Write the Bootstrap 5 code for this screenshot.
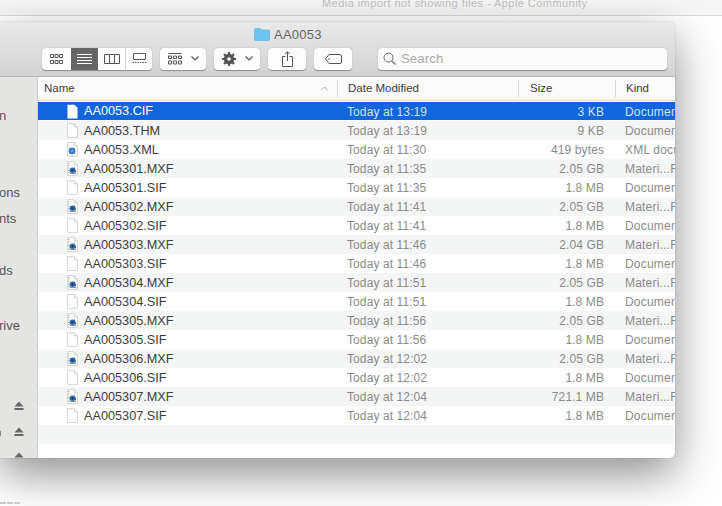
<!DOCTYPE html>
<html lang="en"><head><meta charset="utf-8"><title>AA0053</title>
<link rel="stylesheet" href="https://cdn.jsdelivr.net/npm/bootstrap@5.3.0/dist/css/bootstrap.min.css">
<script src="https://cdn.jsdelivr.net/npm/bootstrap@5.3.0/dist/js/bootstrap.bundle.min.js"></script>
<style>
html,body{height:506px;overflow:hidden}
body{background:#fff;font-family:"Liberation Sans",Arial,sans-serif;font-size:12px;color:#333;position:relative}
.tabbar{height:16px;background:#f6f6f6;border-bottom:1px solid #d9d9d9;padding-left:322px;font-size:11px;line-height:7px;color:#bdbdbd;letter-spacing:.45px;overflow:hidden;white-space:nowrap}
.finder{width:675px;height:436px;margin-top:6px;border-radius:0 6px 6px 0;overflow:hidden;box-shadow:0 16px 45px rgba(0,0,0,.45),0 0 1px rgba(0,0,0,.5);background:#fff}
.tb{height:55px;background:linear-gradient(#e9e9e9,#d2d2d2);border-bottom:1px solid #b5b5b5;padding:4px 8px 0 42px}
.ttl{font-size:13px;line-height:15px;color:#666;gap:4px;height:16px;margin-left:212px;letter-spacing:.25px}
.tools{height:23px;margin-top:5px;gap:8px}
.seg{height:22px;background:#fdfdfd;border-radius:4px;box-shadow:0 .5px 1px rgba(0,0,0,.35);display:flex;align-items:center;justify-content:center;overflow:hidden;flex:none}
.seg svg{display:block}
.arrowgap{gap:9px}
.vw{width:27px;height:22px;display:flex;align-items:center;justify-content:center}
.vw.first{width:29px}
.vw.on{background:#656565}
.vw.sep{border-left:1px solid #d7d7d7}
.srch{width:290px;height:22px;margin-left:18px;background:#fbfbfb;border-radius:4px;box-shadow:0 .5px 1px rgba(0,0,0,.35);display:flex;align-items:center;padding-left:5px;gap:5px;font-size:13px;color:#a9a9a9;letter-spacing:.2px}
.bodyw{height:381px}
.side{width:38px;flex:none;background:#e4e4e2;border-right:1px solid #cfcfcf;font-size:13px;color:#555;overflow:hidden;position:relative}
.side>div{line-height:16px;white-space:nowrap;margin-left:-1px}
.s1{margin-top:31px}.s2{margin-top:61px}.s3{margin-top:10px}.s4{margin-top:36px}.s5{margin-top:39px}
.ej{position:absolute;left:14px}
.side>.nick{position:absolute;left:0;top:354px;width:1px;height:5px;background:#888;margin:0}
.list{flex:1;min-width:0;overflow:hidden}
.hd{height:24px;border-bottom:1px solid #dcdcdc;background:#fbfbfb;font-size:11.5px;color:#3a3a3a;display:flex;align-items:center}
.hd>div{height:17px;line-height:17px;border-right:1px solid #dadada;flex:none;position:relative}
.c1{width:300px;padding-left:6px}.c2{width:181px;padding-left:10px}.c3{width:97px;padding-left:11px}.c4{flex:1;padding-left:10px}
.hd>.c4{border-right:0}
.chev{position:absolute;right:8px;top:6px}
.fl{padding-top:1px}
.rw{height:19px;display:flex;align-items:center;background:#fff;white-space:nowrap;color:#8a8a8a;font-size:12px;letter-spacing:.1px;padding-top:1px}
.rw:nth-child(even){background:#f4f5f5}
.rw.sel{background:#1166dd;color:#cfe0f7;height:18px;margin-bottom:1px}
.sel .nm{color:#fff}
.nm{width:300px;flex:none;padding-left:29px;color:#3c3c3c;display:flex;align-items:center;gap:6px;font-size:12.7px;letter-spacing:0}
.nm svg{flex:none;margin-top:-1px}
.nm span{padding-top:1px}
.dm{width:181px;flex:none;padding-left:9px}
.sz{width:98px;flex:none;text-align:right;padding-right:13px}
.kd{flex:1;padding-left:8px;overflow:hidden;letter-spacing:.2px}
.dash{position:absolute;left:0;top:502px;width:21px;height:2px;background:repeating-linear-gradient(90deg,#c9c9c9 0 6px,#fff 6px 7px)}
</style></head><body>
<svg width="0" height="0" class="d-block position-absolute"><defs>
<symbol id="doc" viewBox="0 0 12 16"><path d="M.5.5H8L11.5 4V15.5H.5Z" fill="#fff" stroke="#cfcfcf"/><path d="M8 .5V4H11.5" fill="#f3f3f3" stroke="#cfcfcf"/></symbol>
<symbol id="xml" viewBox="0 0 12 16"><path d="M.5.5H8L11.5 4V15.5H.5Z" fill="#fff" stroke="#cfcfcf"/><path d="M8 .5V4H11.5" fill="#f3f3f3" stroke="#cfcfcf"/><circle cx="5.500" cy="9.500" r="3.700" fill="#2a78d2"/><path d="M3.500 9.500h4M5.500 7.500v4" stroke="#8fc0f0" stroke-width=".7"/></symbol>
<symbol id="mxf" viewBox="0 0 12 16"><path d="M.5.500H8L11.500 4V15.500H.5Z" fill="#fff" stroke="#cfcfcf"/><path d="M8 .500V4H11.500" fill="#f3f3f3" stroke="#cfcfcf"/><path d="M2 2v12" stroke="#777" stroke-dasharray="1 1.500"/><path d="M3 8.500L8.500 7 10 12H3Z" fill="#33415a"/><circle cx="6" cy="10" r="3" fill="#1f6fb8"/><circle cx="6" cy="10" r="1.200" fill="#14304f"/><path d="M3 13.500h7" stroke="#666" stroke-width=".8"/></symbol>
<symbol id="eject" viewBox="0 0 10 10"><path d="M5 .5L9.500 5.500H.5Z" fill="#666"/><rect x=".5" y="7" width="9" height="2" fill="#666"/></symbol>
</defs></svg>
<div class="tabbar">Media import not showing files - Apple Community</div>
<div class="finder">
 <div class="tb">
  <div class="ttl d-flex align-items-center">
   <svg width="16" height="14" viewBox="0 0 16 14"><path d="M.5 2.500a1 1 0 0 1 1-1H6L7.500 3H14.500a1 1 0 0 1 1 1V12.500a1 1 0 0 1-1 1H1.500a1 1 0 0 1-1-1Z" fill="#6cc3f2" stroke="#58aede" stroke-width=".6"/></svg>
   <span>AA0053</span></div>
  <div class="tools d-flex align-items-center">
   <div class="seg">
    <div class="vw first"><svg width="15" height="12" viewBox="0 0 15 12" fill="none" stroke="#555"><path d="M1.500 1.500h3v3h-3zM6 1.500h3v3H6zM10.500 1.500h3v3h-3zM1.500 7.500h3v3h-3zM6 7.500h3v3H6zM10.500 7.500h3v3h-3z"/></svg></div>
    <div class="vw on"><svg width="15" height="11" viewBox="0 0 15 11" stroke="#fff"><path d="M0 1.500h15M0 4.500h15M0 7.500h15M0 10.500h15"/></svg></div>
    <div class="vw"><svg width="16" height="11" viewBox="0 0 16 11" fill="none" stroke="#555"><path d="M.5 1.500h15v9H.5zM5.500 1.500v9M10.500 1.500v9"/></svg></div>
    <div class="vw sep"><svg width="15" height="11" viewBox="0 0 15 11" fill="none" stroke="#555"><path d="M1.500.5h12v6h-12z"/><path d="M.5 9.500h14" stroke-dasharray="1.500 1"/></svg></div>
   </div>
   <div class="seg arrowgap" style="width:46px">
    <svg width="14" height="12" viewBox="0 0 14 12" fill="none" stroke="#555"><path d="M.5 .5h13M.5 3h3v2.500h-3zM5.500 3h3v2.500h-3zM10.500 3h3v2.500h-3zM.5 8h3v3h-3zM5.500 8h3v3h-3zM10.500 8h3v3h-3z"/></svg>
    <svg width="8" height="5" viewBox="0 0 8 5" fill="none" stroke="#555" stroke-width="1.200"><path d="M.5 .5L4 4 7.500 .5"/></svg>
   </div>
   <div class="seg arrowgap" style="width:46px">
    <svg width="14" height="14" viewBox="0 0 14 14"><circle cx="7" cy="7" r="4" fill="none" stroke="#555" stroke-width="2.500"/><path d="M7 0v14M0 7h14M2 2l10 10M12 2L2 12" stroke="#555" stroke-width="2.200"/><circle cx="7" cy="7" r="1.800" fill="#fff"/></svg>
    <svg width="8" height="5" viewBox="0 0 8 5" fill="none" stroke="#555" stroke-width="1.200"><path d="M.5 .5L4 4 7.500 .5"/></svg>
   </div>
   <div class="seg" style="width:38px"><svg width="11" height="16" viewBox="0 0 11 16" fill="none" stroke="#555"><path d="M3.500 5.500H.5v10h10v-10H7.500M5.500 10V1M3 3L5.500 .8 8 3"/></svg></div>
   <div class="seg" style="width:38px"><svg width="17" height="10" viewBox="0 0 17 10" fill="none" stroke="#555"><path d="M4 .5H15a1.500 1.500 0 0 1 1.500 1.500V8A1.500 1.500 0 0 1 15 9.500H4L.5 5Z"/><circle cx="4" cy="5" r=".8" fill="#555" stroke="none"/></svg></div>
   <div class="srch"><svg width="13" height="13" viewBox="0 0 13 13" fill="none" stroke="#666"><circle cx="5.500" cy="5.500" r="4.500"/><path d="M8.700 8.700L12.500 12.500" stroke-width="1.200"/></svg><span>Search</span></div>
  </div>
 </div>
 <div class="bodyw d-flex">
  <div class="side">
   <div class="s1">n</div><div class="s2">ons</div><div class="s3">nts</div><div class="s4">ds</div><div class="s5">rive</div>
   <svg class="ej" style="top:324px" width="10" height="10"><use href="#eject"/></svg>
   <svg class="ej" style="top:350px" width="10" height="10"><use href="#eject"/></svg>
   <svg class="ej" style="top:375px" width="10" height="10"><use href="#eject"/></svg>
   <div class="nick"></div>
  </div>
  <div class="list">
   <div class="hd">
    <div class="c1">Name<svg class="chev" width="9" height="5" viewBox="0 0 9 5" fill="none" stroke="#aaa"><path d="M1 4.500L4.500 1 8 4.500"/></svg></div>
    <div class="c2">Date Modified</div><div class="c3">Size</div><div class="c4">Kind</div>
   </div>
   <div class="fl" id="fl"></div>
  </div>
 </div>
</div>
<div class="dash"></div>
<script>
var d=[["AA0053.CIF","13:19","3 KB","Document","doc"],["AA0053.THM","13:19","9 KB","Document","doc"],["AA0053.XML","11:30","419 bytes","XML document","xml"],
["AA005301.MXF","11:35","2.05 GB","Materi...File","mxf"],["AA005301.SIF","11:35","1.8 MB","Document","doc"],
["AA005302.MXF","11:41","2.05 GB","Materi...File","mxf"],["AA005302.SIF","11:41","1.8 MB","Document","doc"],
["AA005303.MXF","11:46","2.04 GB","Materi...File","mxf"],["AA005303.SIF","11:46","1.8 MB","Document","doc"],
["AA005304.MXF","11:51","2.05 GB","Materi...File","mxf"],["AA005304.SIF","11:51","1.8 MB","Document","doc"],
["AA005305.MXF","11:56","2.05 GB","Materi...File","mxf"],["AA005305.SIF","11:56","1.8 MB","Document","doc"],
["AA005306.MXF","12:02","2.05 GB","Materi...File","mxf"],["AA005306.SIF","12:02","1.8 MB","Document","doc"],
["AA005307.MXF","12:04","721.1 MB","Materi...File","mxf"],["AA005307.SIF","12:04","1.8 MB","Document","doc"],["","","","",""],["","","","",""]];
document.getElementById("fl").innerHTML=d.map(function(r,i){
 var ic=r[4]?'<svg width="11" height="15"><use href="#'+r[4]+'"/></svg>':'';
 if(i==0)ic='<svg width="11" height="15" viewBox="0 0 12 16"><path d="M.5.5H8L11.500 4V15.500H.5Z" fill="#fff"/></svg>';
 return '<div class="rw'+(i==0?' sel':'')+'"><div class="nm">'+ic+'<span>'+r[0]+'</span></div><div class="dm">'+(r[1]?'Today at '+r[1]:'')+'</div><div class="sz">'+r[2]+'</div><div class="kd">'+r[3]+'</div></div>';
}).join("");
</script>
</body></html>
